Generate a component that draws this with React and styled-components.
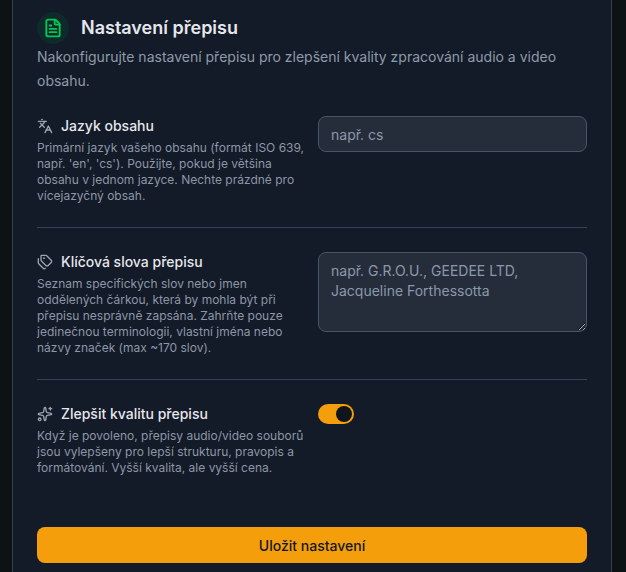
import React from "react";
import styled, { createGlobalStyle } from "styled-components";
import { FileText, Languages, Tags, Sparkles } from "lucide-react";

const GlobalStyle = createGlobalStyle`
  html, body {
    margin: 0;
    padding: 0;
    height: 572px;
    overflow: hidden;
    background-color: #0d1214;
    font-family: Inter, "Liberation Sans", sans-serif;
  }
  * { box-sizing: border-box; }
`;

const Page = styled.div`
  padding: 0 14px 0 12px;
`;

const Card = styled.section`
  display: flex;
  flex-direction: column;
  height: 572px;
  padding: 12px 24px 0;
  background-color: #131a28;
  border-left: 1px solid #374151;
  border-right: 1px solid #374151;
`;

const Header = styled.header`
  display: flex;
  align-items: center;
  gap: 12px;
`;

const IconCircle = styled.div`
  display: flex;
  align-items: center;
  justify-content: center;
  width: 32px;
  height: 32px;
  border-radius: 50%;
  background-color: #0f2a2a;
  color: #00c853;
`;

const Title = styled.h2`
  margin: 0;
  font-size: 18px;
  line-height: 28px;
  font-weight: 600;
  color: #e5e7eb;
`;

const Intro = styled.p`
  margin: 1px 0 0;
  font-size: 14px;
  line-height: 24px;
  color: #8f9aa9;
`;

const Row = styled.div`
  display: grid;
  grid-template-columns: 269px 269px;
  column-gap: 12px;
  padding-top: ${(p) => p.$top}px;
  padding-bottom: ${(p) => p.$bottom}px;
  border-bottom: ${(p) => (p.$last ? "none" : "1px solid #374151")};
`;

const LabelLine = styled.div`
  display: flex;
  align-items: center;
  gap: 8px;
  height: 20px;
  color: #9ca3af;
`;

const Label = styled.label`
  font-size: 14px;
  line-height: 20px;
  font-weight: 500;
  color: #e5e7eb;
`;

const Help = styled.p`
  margin: 4px 0 0;
  font-size: 12px;
  line-height: 16px;
  color: #8d97a6;
`;

const Input = styled.input`
  display: block;
  width: 100%;
  height: 36px;
  padding: 0 12px;
  font: 14px Inter, "Liberation Sans", sans-serif;
  color: #e5e7eb;
  background-color: #252d3a;
  border: 1px solid #475569;
  border-radius: 8px;
  outline: none;

  &::placeholder { color: #8b98aa; opacity: 1; }
`;

const TextArea = styled.textarea`
  display: block;
  width: 100%;
  height: 80px;
  padding: 8px 12px;
  font: 14px/20px Inter, "Liberation Sans", sans-serif;
  color: #e5e7eb;
  background-color: #252d3a;
  border: 1px solid #475569;
  border-radius: 8px;
  outline: none;

  &::placeholder { color: #8b98aa; opacity: 1; }
`;

const Toggle = styled.button`
  display: flex;
  align-items: center;
  justify-content: flex-end;
  width: 36px;
  height: 20px;
  padding: 2px;
  background-color: #f59e0b;
  border: none;
  border-radius: 10px;
`;

const Knob = styled.span`
  display: block;
  width: 16px;
  height: 16px;
  border-radius: 50%;
  background-color: #10151d;
`;

const SaveButton = styled.button`
  width: 100%;
  height: 36px;
  margin-top: 27px;
  font: 500 14px Inter, "Liberation Sans", sans-serif;
  color: #111827;
  background-color: #f59e0b;
  border: none;
  border-radius: 8px;
`;

const App = () => {
  return (
    <>
      <GlobalStyle />
      <Page>
        <Card>
          <Header>
            <IconCircle>
              <FileText size={20} strokeWidth={2.25} />
            </IconCircle>
            <Title>Nastavení přepisu</Title>
          </Header>
          <Intro>Nakonfigurujte nastavení přepisu pro zlepšení kvality zpracování audio a video obsahu.</Intro>

          <Row $top={23} $bottom={23}>
            <div>
              <LabelLine>
                <Languages size={16} />
                <Label>Jazyk obsahu</Label>
              </LabelLine>
              <Help>Primární jazyk vašeho obsahu (formát ISO 639, např. 'en', 'cs'). Použijte, pokud je většina obsahu v jednom jazyce. Nechte prázdné pro vícejazyčný obsah.</Help>
            </div>
            <Input placeholder="např. cs" />
          </Row>

          <Row $top={24} $bottom={23}>
            <div>
              <LabelLine>
                <Tags size={16} />
                <Label>Klíčová slova přepisu</Label>
              </LabelLine>
              <Help>Seznam specifických slov nebo jmen oddělených čárkou, která by mohla být při přepisu nesprávně zapsána. Zahrňte pouze jedinečnou terminologii, vlastní jména nebo názvy značek (max ~170 slov).</Help>
            </div>
            <TextArea placeholder="např. G.R.O.U., GEEDEE LTD, Jacqueline Forthessotta" />
          </Row>

          <Row $top={24} $bottom={24} $last>
            <div>
              <LabelLine>
                <Sparkles size={16} />
                <Label>Zlepšit kvalitu přepisu</Label>
              </LabelLine>
              <Help>Když je povoleno, přepisy audio/video souborů jsou vylepšeny pro lepší strukturu, pravopis a formátování. Vyšší kvalita, ale vyšší cena.</Help>
            </div>
            <div>
              <Toggle aria-label="Zlepšit kvalitu přepisu">
                <Knob />
              </Toggle>
            </div>
          </Row>

          <SaveButton>Uložit nastavení</SaveButton>
        </Card>
      </Page>
    </>
  );
};

export default App;
